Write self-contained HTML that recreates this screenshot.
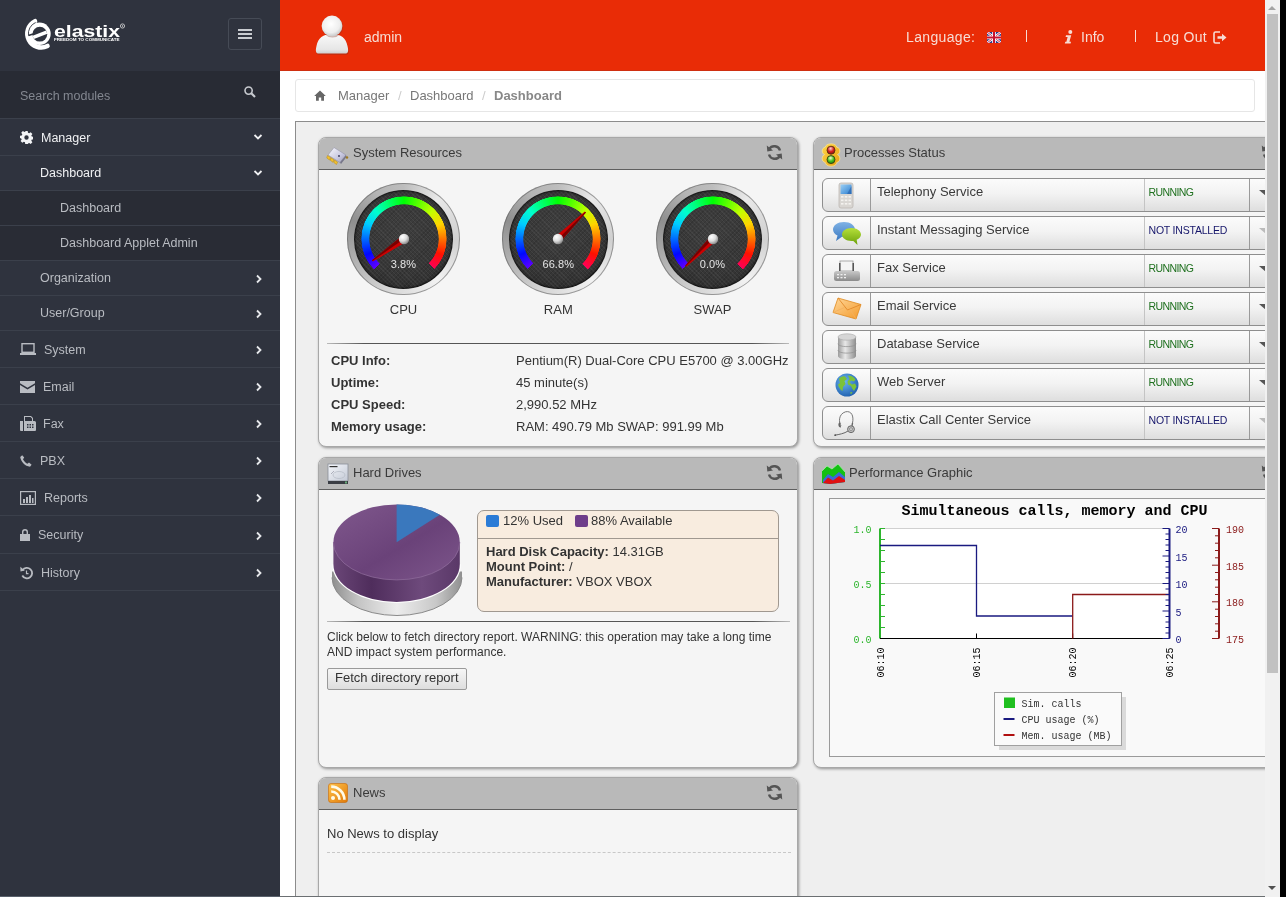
<!DOCTYPE html>
<html><head><meta charset="utf-8"><style>
*{box-sizing:border-box}
html,body{margin:0;padding:0;width:1286px;height:897px;overflow:hidden;background:#000;font-family:"Liberation Sans",sans-serif}
#vp{position:absolute;left:0;top:0;width:1280px;height:897px;background:#fff;overflow:hidden;will-change:transform}
#sb{position:absolute;left:1265px;top:0;width:15px;height:897px;background:#f1f1f1}
#sb .th{position:absolute;left:2px;top:14px;width:11px;height:659px;background:#c1c1c1}
#sb .up{position:absolute;left:3px;top:6px;width:0;height:0;border-left:4px solid transparent;border-right:4px solid transparent;border-bottom:4px solid #a3a3a3}
#sb .dn{position:absolute;left:3px;top:886px;width:0;height:0;border-left:4px solid transparent;border-right:4px solid transparent;border-top:4px solid #505050}
#side{position:absolute;left:0;top:0;width:280px;height:897px;background:#2f333e}
#side .logo{position:absolute;left:0;top:0;width:280px;height:71px}
#side .burger{position:absolute;left:228px;top:18px;width:34px;height:32px;border:1px solid #464b56;border-radius:3px}
#side .burger i{position:absolute;left:9px;width:14px;height:2px;background:#c8cbd0}
#side .search{position:absolute;left:0;top:71px;width:280px;height:48px;background:#282b34;border-bottom:1px solid #3b404b}
#side .search span{position:absolute;left:20px;top:18px;font-size:12.5px;line-height:15px;color:#838790}
.mi{position:absolute;left:0;width:280px;border-bottom:1px solid #3b404b;color:#c8cad0;font-size:12.5px;line-height:15px}
.mi .t{position:absolute;top:0;white-space:nowrap}
.mi .ch{position:absolute;left:255px}
#hdr{position:absolute;left:280px;top:0;width:985px;height:71px;background:#e92c06}
.ht{position:absolute;color:#f7dcd4;font-size:14px;line-height:16px;white-space:nowrap}
#bc{position:absolute;left:295px;top:79px;width:960px;height:33px;border:1px solid #e6e6e6;border-radius:3px;background:#fff}
.bt{position:absolute;top:8px;font-size:13px;line-height:15px;color:#777;white-space:nowrap}
#frame{position:absolute;left:295px;top:121px;width:1000px;height:800px;border:1px solid #8c8c8c;background:#efefef}
.pn{position:absolute;background:#f5f5f5;border:1px solid #a8a8a8;border-radius:8px;box-shadow:1px 1px 3px rgba(0,0,0,.4)}
.ph{position:absolute;left:0;top:0;right:0;height:32px;background:#b9b9b9;border-bottom:1px solid #5f5f5f;border-radius:7px 7px 0 0}
.ph .tt{position:absolute;left:35px;top:7px;font-size:13px;line-height:15px;color:#3a3a3a;white-space:nowrap}
.abs{position:absolute}
.nw{white-space:nowrap}

</style></head><body>
<div id="vp">
<div id="side"><svg class="abs" style="left:0px;top:0px" width="140" height="70" viewBox="0 0 140 70">
<path d="M35 21.2 A13.2 13.2 0 0 0 47.5 46" fill="none" stroke="#fff" stroke-width="4.6" stroke-linecap="round"/>
<circle cx="39.5" cy="33.8" r="11.2" fill="#fff"/>
<path d="M35.6 22.5 A12 12 0 0 0 28.6 35.6" fill="none" stroke="#2f333e" stroke-width="0.9"/>
<clipPath id="lgc"><circle cx="39.8" cy="34.2" r="7.4"/></clipPath>
<g clip-path="url(#lgc)"><rect x="28" y="24" width="24" height="22" fill="#2f333e"/><path d="M28 39.5 L51 30.5" stroke="#fff" stroke-width="3.6"/></g>
<path d="M28.5 35.5 L33 34" stroke="#2f333e" stroke-width="1.6"/>
<text x="54" y="36.7" font-family="Liberation Sans" font-weight="bold" font-size="16.5" fill="#fff" textLength="66" lengthAdjust="spacingAndGlyphs">elastix</text>
<text x="54" y="41" font-family="Liberation Sans" font-weight="bold" font-size="3.4" fill="#fff" textLength="65.5" lengthAdjust="spacingAndGlyphs">FREEDOM TO COMMUNICATE</text>
<circle cx="122.5" cy="26" r="2.1" fill="none" stroke="#ddd" stroke-width="0.8"/><circle cx="122.5" cy="26" r="0.7" fill="#ddd"/>
</svg><div class="burger"><i style="top:10px"></i><i style="top:14px"></i><i style="top:18px"></i></div><div class="search"><span>Search modules</span><svg style="position:absolute;left:244px;top:15px" width="12" height="12" viewBox="0 0 12 12"><circle cx="4.6" cy="4.6" r="3.6" stroke="#c8cbd0" stroke-width="1.6" fill="none"/><path d="M7.3 7.3L11 11" stroke="#c8cbd0" stroke-width="2.2"/></svg></div><div class="mi" style="top:119px;height:37px;"><span class="t" style="left:41px;top:12px;color:#f0f1f3">Manager</span><svg class="ch" width="10" height="8" style="top:14px;left:253px" viewBox="0 0 10 8"><path d="M1.5 2 L5 5.5 L8.5 2" stroke="#f0f1f3" stroke-width="1.8" fill="none"/></svg></div><svg style="position:absolute;left:20px;top:131px" width="13" height="13" viewBox="0 0 13 13"><path fill="#f3f4f6" d="M5.3 0h2.4l.3 1.8 1.2.5 1.5-1.1 1.7 1.7-1.1 1.5.5 1.2 1.8.3v2.4l-1.8.3-.5 1.2 1.1 1.5-1.7 1.7-1.5-1.1-1.2.5-.3 1.8H5.3L5 11.2l-1.2-.5-1.5 1.1L.6 10.1l1.1-1.5-.5-1.2L0 7.1V4.7l1.8-.3.5-1.2L1.2 1.7 2.9 0 4.4 1.1l1.2-.5z M6.5 4.3a2.2 2.2 0 1 0 0 4.4a2.2 2.2 0 1 0 0-4.4z"/></svg>
<div class="mi" style="top:156px;height:35px;"><span class="t" style="left:40px;top:10px;color:#f0f1f3">Dashboard</span><svg class="ch" width="10" height="8" style="top:13px;left:253px" viewBox="0 0 10 8"><path d="M1.5 2 L5 5.5 L8.5 2" stroke="#f0f1f3" stroke-width="1.8" fill="none"/></svg></div>
<div class="mi" style="top:191px;height:35px;background:#292c35;"><span class="t" style="left:60px;top:10px;color:#b9bcc2">Dashboard</span></div>
<div class="mi" style="top:226px;height:35px;background:#292c35;"><span class="t" style="left:60px;top:10px;color:#b9bcc2">Dashboard Applet Admin</span></div>
<div class="mi" style="top:261px;height:35px;"><span class="t" style="left:40px;top:10px;color:#b9bcc2">Organization</span><svg class="ch" width="8" height="10" style="top:13px;left:255px" viewBox="0 0 8 10"><path d="M2 1.5 L5.5 5 L2 8.5" stroke="#e6e8eb" stroke-width="1.8" fill="none"/></svg></div>
<div class="mi" style="top:296px;height:35px;"><span class="t" style="left:40px;top:10px;color:#b9bcc2">User/Group</span><svg class="ch" width="8" height="10" style="top:13px;left:255px" viewBox="0 0 8 10"><path d="M2 1.5 L5.5 5 L2 8.5" stroke="#e6e8eb" stroke-width="1.8" fill="none"/></svg></div>
<div class="mi" style="top:331px;height:37px;"><span class="t" style="left:44px;top:12px;color:#b9bcc2">System</span><svg class="ch" width="8" height="10" style="top:14px;left:255px" viewBox="0 0 8 10"><path d="M2 1.5 L5.5 5 L2 8.5" stroke="#e6e8eb" stroke-width="1.8" fill="none"/></svg></div><svg style="position:absolute;left:20px;top:343px" width="16" height="12" viewBox="0 0 16 12"><rect x="2" y="0.7" width="12" height="8.6" fill="none" stroke="#b9bcc2" stroke-width="1.4"/><rect x="0" y="10" width="16" height="2" fill="#b9bcc2"/></svg>
<div class="mi" style="top:368px;height:37px;"><span class="t" style="left:43px;top:12px;color:#b9bcc2">Email</span><svg class="ch" width="8" height="10" style="top:14px;left:255px" viewBox="0 0 8 10"><path d="M2 1.5 L5.5 5 L2 8.5" stroke="#e6e8eb" stroke-width="1.8" fill="none"/></svg></div><svg style="position:absolute;left:20px;top:381px" width="15" height="12" viewBox="0 0 15 12"><path fill="#b9bcc2" d="M0 0h15v2.2L7.5 6.8 0 2.2z M0 4l7.5 4.6L15 4v8H0z"/></svg>
<div class="mi" style="top:405px;height:37px;"><span class="t" style="left:43px;top:12px;color:#b9bcc2">Fax</span><svg class="ch" width="8" height="10" style="top:14px;left:255px" viewBox="0 0 8 10"><path d="M2 1.5 L5.5 5 L2 8.5" stroke="#e6e8eb" stroke-width="1.8" fill="none"/></svg></div><svg style="position:absolute;left:20px;top:416px" width="16" height="15" viewBox="0 0 16 15"><path fill="#b9bcc2" d="M0 5h3v10H1a1 1 0 0 1-1-1z M4 5V0h7l2 2v3h1.5a1.5 1.5 0 0 1 1.5 1.5V14a1 1 0 0 1-1 1H4z M5 1v4h7V2.5L10.5 1z"/><g fill="#2f333e"><rect x="7" y="8" width="1.5" height="1.5"/><rect x="9.5" y="8" width="1.5" height="1.5"/><rect x="12" y="8" width="1.5" height="1.5"/><rect x="7" y="10.5" width="1.5" height="1.5"/><rect x="9.5" y="10.5" width="1.5" height="1.5"/><rect x="12" y="10.5" width="1.5" height="1.5"/></g></svg>
<div class="mi" style="top:442px;height:37px;"><span class="t" style="left:40px;top:12px;color:#b9bcc2">PBX</span><svg class="ch" width="8" height="10" style="top:14px;left:255px" viewBox="0 0 8 10"><path d="M2 1.5 L5.5 5 L2 8.5" stroke="#e6e8eb" stroke-width="1.8" fill="none"/></svg></div><svg style="position:absolute;left:20px;top:455px" width="13" height="12" viewBox="0 0 13 12"><path fill="#b9bcc2" d="M2.2 0.2L4.2 2.6 3 4.2C3.8 6 5.5 7.8 7.4 8.8L9 7.6l2.6 2.1L10 11.8C5 11 1 7 0.2 2z"/></svg>
<div class="mi" style="top:479px;height:37px;"><span class="t" style="left:44px;top:12px;color:#b9bcc2">Reports</span><svg class="ch" width="8" height="10" style="top:14px;left:255px" viewBox="0 0 8 10"><path d="M2 1.5 L5.5 5 L2 8.5" stroke="#e6e8eb" stroke-width="1.8" fill="none"/></svg></div><svg style="position:absolute;left:20px;top:491px" width="16" height="14" viewBox="0 0 16 14"><rect x="0.6" y="0.6" width="14.8" height="12.8" fill="none" stroke="#b9bcc2" stroke-width="1.2"/><rect x="3" y="8" width="2" height="4" fill="#b9bcc2"/><rect x="6" y="6" width="2" height="6" fill="#b9bcc2"/><rect x="9" y="4" width="2" height="8" fill="#b9bcc2"/><rect x="12" y="7" width="1.5" height="5" fill="#b9bcc2"/></svg>
<div class="mi" style="top:516px;height:38px;"><span class="t" style="left:38px;top:12px;color:#b9bcc2">Security</span><svg class="ch" width="8" height="10" style="top:15px;left:255px" viewBox="0 0 8 10"><path d="M2 1.5 L5.5 5 L2 8.5" stroke="#e6e8eb" stroke-width="1.8" fill="none"/></svg></div><svg style="position:absolute;left:20px;top:528px" width="10" height="13" viewBox="0 0 10 13"><path fill="#b9bcc2" d="M0 6h10v7H0z M2 6V4a3 3 0 0 1 6 0v2H6.6V4a1.6 1.6 0 0 0-3.2 0v2z"/></svg>
<div class="mi" style="top:554px;height:37px;"><span class="t" style="left:41px;top:12px;color:#b9bcc2">History</span><svg class="ch" width="8" height="10" style="top:14px;left:255px" viewBox="0 0 8 10"><path d="M2 1.5 L5.5 5 L2 8.5" stroke="#e6e8eb" stroke-width="1.8" fill="none"/></svg></div><svg style="position:absolute;left:20px;top:566px" width="14" height="14" viewBox="0 0 14 14"><path d="M2.6 4.2A5.2 5.2 0 1 1 2.3 9.5" fill="none" stroke="#b9bcc2" stroke-width="1.8"/><path fill="#b9bcc2" d="M0.3 0.8L4.8 4.6 0.5 5.4z"/><path d="M6.5 4.5V7.6H8.5" fill="none" stroke="#b9bcc2" stroke-width="1.2"/></svg></div>
<div id="hdr"></div><div class="abs" style="left:280px;top:70px;width:985px;height:1px;background:#cf2f10"></div><svg class="abs" style="left:314px;top:13px" width="36" height="44" viewBox="0 0 36 44">
<defs><radialGradient id="ug1" cx="0.45" cy="0.4" r="0.6"><stop offset="0" stop-color="#ffffff"/><stop offset="0.7" stop-color="#eeeeee"/><stop offset="1" stop-color="#c9c9c9"/></radialGradient>
<linearGradient id="ug2" x1="0" y1="0" x2="0" y2="1"><stop offset="0" stop-color="#fafafa"/><stop offset="0.8" stop-color="#e6e6e6"/><stop offset="1" stop-color="#cfcfcf"/></linearGradient></defs>
<path d="M4 40.5 C1.5 40 1.5 37 2.5 33 C4 25 9 21 18 21 C27 21 32 25 33.5 33 C34.5 37 34.5 40 32 40.5 Z" fill="#8a3020" opacity="0.45" transform="translate(0.5,1.2)"/>
<path d="M4 40.5 C1.5 40 1.5 37 2.5 33 C4 25 9 21 18 21 C27 21 32 25 33.5 33 C34.5 37 34.5 40 32 40.5 Z" fill="url(#ug2)"/>
<circle cx="18.5" cy="14" r="10.6" fill="#8a3020" opacity="0.35"/>
<circle cx="18" cy="13" r="10.4" fill="url(#ug1)"/>
</svg><span class="ht" style="left:364px;top:29px">admin</span><span class="ht" style="left:906px;top:29px;letter-spacing:0.35px">Language:</span><svg class="abs" style="left:987px;top:32px" width="14" height="11" viewBox="0 0 14 11">
<rect width="14" height="11" fill="#2b3a8a"/>
<path d="M0 0L14 11M14 0L0 11" stroke="#fff" stroke-width="2.4"/>
<path d="M0 0L14 11M14 0L0 11" stroke="#c8102e" stroke-width="0.9"/>
<path d="M7 0V11M0 5.5H14" stroke="#fff" stroke-width="3.6"/>
<path d="M7 0V11M0 5.5H14" stroke="#c8102e" stroke-width="2"/>
</svg><div class="abs" style="left:1026px;top:30px;width:1px;height:12px;background:#f7dcd4"></div><svg class="abs" style="left:1064px;top:30px" width="10" height="14" viewBox="0 0 10 14"><circle cx="6.3" cy="2" r="2" fill="#f7dcd4"/><path d="M2 5.3H7.2L5.4 11.7H7L6.6 13.5H0.8L1.3 11.7H2.4L3.6 7.1H1.6z" fill="#f7dcd4"/></svg><span class="ht" style="left:1081px;top:29px">Info</span><div class="abs" style="left:1135px;top:30px;width:1px;height:12px;background:#f7dcd4"></div><span class="ht" style="left:1155px;top:29px;letter-spacing:0.3px">Log Out</span><svg class="abs" style="left:1213px;top:31px" width="14" height="13" viewBox="0 0 14 13"><path d="M7 1H2.5A1.5 1.5 0 0 0 1 2.5V10.5A1.5 1.5 0 0 0 2.5 12H7" fill="none" stroke="#f7dcd4" stroke-width="1.6"/><path d="M4.5 5.2H9V2.8L13.5 6.5 9 10.2V7.8H4.5z" fill="#f7dcd4"/></svg><div id="bc"></div><svg class="abs" style="left:314px;top:90px" width="12" height="11" viewBox="0 0 12 11"><path d="M6 0.5L0.2 6H2V10.8H4.8V7.5H7.2V10.8H10V6H11.8z" fill="#666"/></svg><span class="bt" style="left:338px;top:88px">Manager</span><span class="bt" style="left:398px;top:88px;color:#ccc">/</span><span class="bt" style="left:410px;top:88px">Dashboard</span><span class="bt" style="left:482px;top:88px;color:#ccc">/</span><span class="bt" style="left:494px;top:88px;font-weight:bold;color:#888">Dashboard</span><div id="frame"></div><div class="pn" style="left:318px;top:137px;width:480px;height:310px"><div class="ph"><span class="tt" style="left:34px">System Resources</span><svg class="abs" style="right:14px;top:6px" width="17" height="17" viewBox="0 0 17 17"><path d="M14 6.5A6 6 0 0 0 3.2 5" fill="none" stroke="#555" stroke-width="2.4"/><path d="M0.8 1.5L1.3 7.5 7 6.5z" fill="#555"/><path d="M3 10.5A6 6 0 0 0 13.8 12" fill="none" stroke="#555" stroke-width="2.4"/><path d="M16.2 15.5L15.7 9.5 10 10.5z" fill="#555"/></svg></div></div><svg class="abs" style="left:326px;top:145px" width="24" height="20" viewBox="0 0 24 20"><defs><linearGradient id="chb" x1="0" y1="0" x2="1" y2="1"><stop offset="0" stop-color="#fafaff"/><stop offset="0.6" stop-color="#c9c9e0"/><stop offset="1" stop-color="#9a9ab8"/></linearGradient></defs>
<path d="M8 2.5L20 10 14 17.5 2 10z" fill="url(#chb)" stroke="#8a8aa0" stroke-width="0.5"/><path d="M14 17.5L20 10 20.5 12 15 19z" fill="#77778a"/>
<g fill="#f2c12e" stroke="#b98a10" stroke-width="0.5"><path d="M1.5 10.5L4.5 12.5 3.5 15 0.8 13z"/><path d="M5 12.8L8 14.8 7 17.3 4.3 15.3z"/><path d="M8.5 15L11.5 17 10.5 19.5 7.8 17.5z"/></g><circle cx="13" cy="11" r="0.9" fill="#335"/><circle cx="21" cy="12.5" r="1.2" fill="#a07a20"/></svg><div class="abs" style="left:347.3px;top:183.10000000000002px;width:112.4px;height:112.4px;border-radius:50%;background:conic-gradient(from 0deg,#bdbdbd,#e9e9e9 40deg,#cfcfcf 90deg,#f2f2f2 140deg,#d4d4d4 200deg,#8f8f8f 290deg,#b5b5b5 330deg,#bdbdbd);box-shadow:inset 0 0 0 1px rgba(90,90,90,.55)"></div><div class="abs" style="left:354.0px;top:189.8px;width:99.0px;height:99.0px;border-radius:50%;background:repeating-linear-gradient(45deg,rgba(255,255,255,.05) 0 1px,transparent 1px 3px),repeating-linear-gradient(-45deg,rgba(0,0,0,.12) 0 1px,transparent 1px 3px),radial-gradient(circle at 50% 40%,#3e3e3e 0%,#363636 60%,#262626 100%);box-shadow:inset 0 0 2px 1px rgba(0,0,0,.7)"></div><div class="abs" style="left:360.5px;top:196.3px;width:86px;height:86px;border-radius:50%;background:conic-gradient(from 225deg,hsl(262,100%,50%) 0.0deg,hsl(238,100%,50%) 22.5deg,hsl(215,100%,50%) 45.0deg,hsl(192,100%,50%) 67.5deg,hsl(168,100%,50%) 90.0deg,hsl(144,100%,50%) 112.5deg,hsl(121,100%,50%) 135.0deg,hsl(98,100%,50%) 157.5deg,hsl(74,100%,50%) 180.0deg,hsl(50,100%,50%) 202.5deg,hsl(27,100%,50%) 225.0deg,hsl(4,100%,50%) 247.5deg,hsl(340,100%,50%) 270.0deg,transparent 270deg);-webkit-mask:radial-gradient(circle closest-side,transparent 34.3px,#000 35px,#000 42.3px,transparent 43px)"></div><svg class="abs" style="left:358.5px;top:194.3px" width="90" height="90" viewBox="-45 -45 90 90"><polygon points="-2.05,-2.96 -32.09,21.29 -31.19,22.59 2.05,2.96" fill="#cc0000"/><polygon points="-2.05,-2.96 -32.09,21.29 -31.64,21.94 0,0" fill="#780000"/><defs><radialGradient id="kn0" cx="0.35" cy="0.3" r="0.8"><stop offset="0" stop-color="#fff"/><stop offset="0.5" stop-color="#ddd"/><stop offset="1" stop-color="#777"/></radialGradient></defs><circle cx="0" cy="0" r="5.2" fill="url(#kn0)"/></svg><div class="abs nw" style="left:373.5px;top:258.3px;width:60px;text-align:center;font-size:11px;line-height:13px;letter-spacing:0.1px;color:#e4e4e4">3.8%</div><div class="abs nw" style="left:373.5px;top:302.3px;width:60px;text-align:center;font-size:13px;line-height:15px;color:#333">CPU</div><div class="abs" style="left:502.09999999999997px;top:183.10000000000002px;width:112.4px;height:112.4px;border-radius:50%;background:conic-gradient(from 0deg,#bdbdbd,#e9e9e9 40deg,#cfcfcf 90deg,#f2f2f2 140deg,#d4d4d4 200deg,#8f8f8f 290deg,#b5b5b5 330deg,#bdbdbd);box-shadow:inset 0 0 0 1px rgba(90,90,90,.55)"></div><div class="abs" style="left:508.79999999999995px;top:189.8px;width:99.0px;height:99.0px;border-radius:50%;background:repeating-linear-gradient(45deg,rgba(255,255,255,.05) 0 1px,transparent 1px 3px),repeating-linear-gradient(-45deg,rgba(0,0,0,.12) 0 1px,transparent 1px 3px),radial-gradient(circle at 50% 40%,#3e3e3e 0%,#363636 60%,#262626 100%);box-shadow:inset 0 0 2px 1px rgba(0,0,0,.7)"></div><div class="abs" style="left:515.3px;top:196.3px;width:86px;height:86px;border-radius:50%;background:conic-gradient(from 225deg,hsl(262,100%,50%) 0.0deg,hsl(238,100%,50%) 22.5deg,hsl(215,100%,50%) 45.0deg,hsl(192,100%,50%) 67.5deg,hsl(168,100%,50%) 90.0deg,hsl(144,100%,50%) 112.5deg,hsl(121,100%,50%) 135.0deg,hsl(98,100%,50%) 157.5deg,hsl(74,100%,50%) 180.0deg,hsl(50,100%,50%) 202.5deg,hsl(27,100%,50%) 225.0deg,hsl(4,100%,50%) 247.5deg,hsl(340,100%,50%) 270.0deg,transparent 270deg);-webkit-mask:radial-gradient(circle closest-side,transparent 34.3px,#000 35px,#000 42.3px,transparent 43px)"></div><svg class="abs" style="left:513.3px;top:194.3px" width="90" height="90" viewBox="-45 -45 90 90"><polygon points="2.53,2.56 27.95,-26.49 26.84,-27.62 -2.53,-2.56" fill="#cc0000"/><polygon points="2.53,2.56 27.95,-26.49 27.39,-27.05 0,0" fill="#780000"/><defs><radialGradient id="kn1" cx="0.35" cy="0.3" r="0.8"><stop offset="0" stop-color="#fff"/><stop offset="0.5" stop-color="#ddd"/><stop offset="1" stop-color="#777"/></radialGradient></defs><circle cx="0" cy="0" r="5.2" fill="url(#kn1)"/></svg><div class="abs nw" style="left:528.3px;top:258.3px;width:60px;text-align:center;font-size:11px;line-height:13px;letter-spacing:0.1px;color:#e4e4e4">66.8%</div><div class="abs nw" style="left:528.3px;top:302.3px;width:60px;text-align:center;font-size:13px;line-height:15px;color:#333">RAM</div><div class="abs" style="left:656.3px;top:183.10000000000002px;width:112.4px;height:112.4px;border-radius:50%;background:conic-gradient(from 0deg,#bdbdbd,#e9e9e9 40deg,#cfcfcf 90deg,#f2f2f2 140deg,#d4d4d4 200deg,#8f8f8f 290deg,#b5b5b5 330deg,#bdbdbd);box-shadow:inset 0 0 0 1px rgba(90,90,90,.55)"></div><div class="abs" style="left:663.0px;top:189.8px;width:99.0px;height:99.0px;border-radius:50%;background:repeating-linear-gradient(45deg,rgba(255,255,255,.05) 0 1px,transparent 1px 3px),repeating-linear-gradient(-45deg,rgba(0,0,0,.12) 0 1px,transparent 1px 3px),radial-gradient(circle at 50% 40%,#3e3e3e 0%,#363636 60%,#262626 100%);box-shadow:inset 0 0 2px 1px rgba(0,0,0,.7)"></div><div class="abs" style="left:669.5px;top:196.3px;width:86px;height:86px;border-radius:50%;background:conic-gradient(from 225deg,hsl(262,100%,50%) 0.0deg,hsl(238,100%,50%) 22.5deg,hsl(215,100%,50%) 45.0deg,hsl(192,100%,50%) 67.5deg,hsl(168,100%,50%) 90.0deg,hsl(144,100%,50%) 112.5deg,hsl(121,100%,50%) 135.0deg,hsl(98,100%,50%) 157.5deg,hsl(74,100%,50%) 180.0deg,hsl(50,100%,50%) 202.5deg,hsl(27,100%,50%) 225.0deg,hsl(4,100%,50%) 247.5deg,hsl(340,100%,50%) 270.0deg,transparent 270deg);-webkit-mask:radial-gradient(circle closest-side,transparent 34.3px,#000 35px,#000 42.3px,transparent 43px)"></div><svg class="abs" style="left:667.5px;top:194.3px" width="90" height="90" viewBox="-45 -45 90 90"><polygon points="-2.55,-2.55 -27.78,26.66 -26.66,27.78 2.55,2.55" fill="#cc0000"/><polygon points="-2.55,-2.55 -27.78,26.66 -27.22,27.22 0,0" fill="#780000"/><defs><radialGradient id="kn2" cx="0.35" cy="0.3" r="0.8"><stop offset="0" stop-color="#fff"/><stop offset="0.5" stop-color="#ddd"/><stop offset="1" stop-color="#777"/></radialGradient></defs><circle cx="0" cy="0" r="5.2" fill="url(#kn2)"/></svg><div class="abs nw" style="left:682.5px;top:258.3px;width:60px;text-align:center;font-size:11px;line-height:13px;letter-spacing:0.1px;color:#e4e4e4">0.0%</div><div class="abs nw" style="left:682.5px;top:302.3px;width:60px;text-align:center;font-size:13px;line-height:15px;color:#333">SWAP</div><div class="abs" style="left:327px;top:343px;width:462px;height:1px;background:linear-gradient(90deg,#bbb,#555 8%,#555 92%,#bbb)"></div><div class="abs nw" style="left:331px;top:353px;font-size:13px;line-height:15px;font-weight:bold;color:#333">CPU Info:</div><div class="abs nw" style="left:516px;top:353px;font-size:13px;line-height:15px;color:#333">Pentium(R) Dual-Core CPU E5700 @ 3.00GHz</div><div class="abs nw" style="left:331px;top:375px;font-size:13px;line-height:15px;font-weight:bold;color:#333">Uptime:</div><div class="abs nw" style="left:516px;top:375px;font-size:13px;line-height:15px;color:#333">45 minute(s)</div><div class="abs nw" style="left:331px;top:397px;font-size:13px;line-height:15px;font-weight:bold;color:#333">CPU Speed:</div><div class="abs nw" style="left:516px;top:397px;font-size:13px;line-height:15px;color:#333">2,990.52 MHz</div><div class="abs nw" style="left:331px;top:419px;font-size:13px;line-height:15px;font-weight:bold;color:#333">Memory usage:</div><div class="abs nw" style="left:516px;top:419px;font-size:13px;line-height:15px;color:#333">RAM: 490.79 Mb SWAP: 991.99 Mb</div><div class="pn" style="left:318px;top:457px;width:480px;height:311px"><div class="ph"><span class="tt" style="left:34px">Hard Drives</span><svg class="abs" style="right:14px;top:6px" width="17" height="17" viewBox="0 0 17 17"><path d="M14 6.5A6 6 0 0 0 3.2 5" fill="none" stroke="#555" stroke-width="2.4"/><path d="M0.8 1.5L1.3 7.5 7 6.5z" fill="#555"/><path d="M3 10.5A6 6 0 0 0 13.8 12" fill="none" stroke="#555" stroke-width="2.4"/><path d="M16.2 15.5L15.7 9.5 10 10.5z" fill="#555"/></svg></div></div><svg class="abs" style="left:327px;top:463px" width="22" height="22" viewBox="0 0 22 22"><defs><linearGradient id="hdb" x1="0" y1="0" x2="1" y2="1"><stop offset="0" stop-color="#f4f6fa"/><stop offset="1" stop-color="#c4cad6"/></linearGradient></defs>
<rect x="1" y="1" width="20" height="17" fill="url(#hdb)" stroke="#8a8f9a" stroke-width="0.8"/><rect x="2.5" y="3" width="8" height="1.2" fill="#333"/><ellipse cx="12" cy="12" rx="6" ry="3.5" fill="none" stroke="#b8bec8" stroke-width="0.8"/><path d="M4 11L7 8" stroke="#889" stroke-width="0.6"/>
<rect x="1" y="18" width="20" height="3" fill="#3a3d44"/><rect x="18" y="18.5" width="2" height="2" fill="#6a7"/></svg><svg class="abs" style="left:326px;top:498px" width="142" height="124" viewBox="0 0 142 124"><defs>
<linearGradient id="pgBase" x1="0" y1="0" x2="1" y2="0"><stop offset="0" stop-color="#8e8e8e"/><stop offset="0.2" stop-color="#c4c4c4"/><stop offset="0.5" stop-color="#ececec"/><stop offset="0.8" stop-color="#c8c8c8"/><stop offset="1" stop-color="#909090"/></linearGradient>
<linearGradient id="pgSide" x1="0" y1="0" x2="1" y2="0"><stop offset="0" stop-color="#6a4677"/><stop offset="0.3" stop-color="#4f2d5c"/><stop offset="0.7" stop-color="#6e4a7c"/><stop offset="1" stop-color="#5a3868"/></linearGradient>
<linearGradient id="pgTop" x1="0" y1="0" x2="1" y2="1"><stop offset="0" stop-color="#80588d"/><stop offset="0.55" stop-color="#6a4279"/><stop offset="1" stop-color="#7d568b"/></linearGradient>
</defs><path d="M6.00,73.50 L6.00,79.50 A65,38 0 0 0 136.00,79.50 L136.00,73.50 Z" fill="url(#pgBase)"/><path d="M6.00,79.50 A65,38 0 0 0 136.00,79.50" fill="none" stroke="#8a8a8a" stroke-width="1"/><path d="M7.40,66.20 A63.2,37.7 0 0 0 133.80,66.20" fill="none" stroke="#fff" stroke-width="2.2"/><path d="M7.40,44.20 L7.40,66.20 A63.2,37.7 0 0 0 133.80,66.20 L133.80,44.20 Z" fill="url(#pgSide)"/><ellipse cx="70.60" cy="44.20" rx="63.2" ry="37.7" fill="url(#pgTop)"/><path d="M70.60,44.20 L70.60,6.50 A63.2,37.7 0 0 1 113.86,16.72 Z" fill="#3a78bd"/><path d="M7.40,44.20 A63.2,37.7 0 0 0 133.80,44.20" fill="none" stroke="#8d6a99" stroke-width="0.8"/></svg><div class="abs" style="left:477px;top:510px;width:302px;height:102px;background:#f8ecdf;border:1px solid #a09890;border-radius:7px"></div><div class="abs" style="left:478px;top:538px;width:300px;height:1px;background:#a09890"></div><div class="abs" style="left:486px;top:515px;width:13px;height:12px;background:#2b7bd6;border-radius:2px"></div><div class="abs nw" style="left:503px;top:513px;font-size:13px;line-height:15px;color:#333">12% Used</div><div class="abs" style="left:575px;top:515px;width:13px;height:12px;background:#6e3d8a;border-radius:2px"></div><div class="abs nw" style="left:591px;top:513px;font-size:13px;line-height:15px;color:#333">88% Available</div><div class="abs nw" style="left:486px;top:544px;font-size:13px;line-height:15px;color:#333"><b>Hard Disk Capacity:</b> 14.31GB</div><div class="abs nw" style="left:486px;top:559px;font-size:13px;line-height:15px;color:#333"><b>Mount Point:</b> /</div><div class="abs nw" style="left:486px;top:574px;font-size:13px;line-height:15px;color:#333"><b>Manufacturer:</b> VBOX VBOX</div><div class="abs" style="left:327px;top:621px;width:463px;height:1px;background:linear-gradient(90deg,#bbb,#555 8%,#555 92%,#bbb)"></div><div class="abs" style="left:327px;top:630px;width:470px;font-size:12px;line-height:14.5px;color:#333">Click below to fetch directory report. WARNING: this operation may take a long time AND impact system performance.</div><div class="abs nw" style="left:327px;top:668px;width:140px;height:22px;border:1px solid #9a9a9a;border-radius:2px;background:linear-gradient(#f6f6f6,#dedede);font-size:13px;line-height:18px;color:#333;padding-left:7px">Fetch directory report</div><div class="pn" style="left:318px;top:777px;width:480px;height:200px"><div class="ph"><span class="tt" style="left:34px">News</span><svg class="abs" style="right:14px;top:6px" width="17" height="17" viewBox="0 0 17 17"><path d="M14 6.5A6 6 0 0 0 3.2 5" fill="none" stroke="#555" stroke-width="2.4"/><path d="M0.8 1.5L1.3 7.5 7 6.5z" fill="#555"/><path d="M3 10.5A6 6 0 0 0 13.8 12" fill="none" stroke="#555" stroke-width="2.4"/><path d="M16.2 15.5L15.7 9.5 10 10.5z" fill="#555"/></svg></div></div><svg class="abs" style="left:328px;top:783px" width="20" height="20" viewBox="0 0 20 20"><defs><linearGradient id="rsb" x1="0" y1="0" x2="1" y2="1"><stop offset="0" stop-color="#ffc24a"/><stop offset="1" stop-color="#e07a0a"/></linearGradient></defs>
<rect x="0.5" y="0.5" width="19" height="19" rx="2.5" fill="url(#rsb)" stroke="#c86a08" stroke-width="0.6"/><circle cx="5" cy="15" r="2" fill="#fffbe8"/><path d="M3.2 8.5A8.3 8.3 0 0 1 11.5 16.8" fill="none" stroke="#fffbe8" stroke-width="2.6"/><path d="M3.2 3.6A13.2 13.2 0 0 1 16.4 16.8" fill="none" stroke="#fffbe8" stroke-width="2.6"/></svg><div class="abs nw" style="left:327px;top:826px;font-size:13px;line-height:15px;color:#333">No News to display</div><div class="abs" style="left:327px;top:852px;width:464px;height:0;border-top:1px dashed #c8c8c8"></div><div class="pn" style="left:813px;top:137px;width:480px;height:310px"><div class="ph"><span class="tt" style="left:30px">Processes Status</span><svg class="abs" style="right:14px;top:6px" width="17" height="17" viewBox="0 0 17 17"><path d="M14 6.5A6 6 0 0 0 3.2 5" fill="none" stroke="#555" stroke-width="2.4"/><path d="M0.8 1.5L1.3 7.5 7 6.5z" fill="#555"/><path d="M3 10.5A6 6 0 0 0 13.8 12" fill="none" stroke="#555" stroke-width="2.4"/><path d="M16.2 15.5L15.7 9.5 10 10.5z" fill="#555"/></svg></div></div><svg class="abs" style="left:821px;top:143px" width="20" height="24" viewBox="0 0 20 24"><defs><radialGradient id="tlr" cx="0.45" cy="0.3" r="0.7"><stop offset="0" stop-color="#ffd0d0"/><stop offset="0.55" stop-color="#d42020"/><stop offset="1" stop-color="#8a1010"/></radialGradient><radialGradient id="tlg" cx="0.45" cy="0.3" r="0.7"><stop offset="0" stop-color="#f4ffd0"/><stop offset="0.55" stop-color="#48c420"/><stop offset="1" stop-color="#1f7a10"/></radialGradient><linearGradient id="tly" x1="0" y1="0" x2="1" y2="1"><stop offset="0" stop-color="#ffd84a"/><stop offset="1" stop-color="#e8a010"/></linearGradient></defs>
<path d="M10 0.8C13.5 0.8 15.5 2.5 15.8 4.2C17.8 4.6 18.8 6 18.8 8S17.6 11 16.5 11.6C17.8 12.2 18.8 13.5 18.8 15.5S17.8 19 15.8 19.4C15.5 21.5 13.5 23.2 10 23.2S4.5 21.5 4.2 19.4C2.2 19 1.2 17.5 1.2 15.5S2.2 12.2 3.5 11.6C2.4 11 1.2 10 1.2 8S2.2 4.6 4.2 4.2C4.5 2.5 6.5 0.8 10 0.8z" fill="url(#tly)" stroke="#fbe79a" stroke-width="0.7"/>
<circle cx="10" cy="7.2" r="4" fill="url(#tlr)" stroke="#5a3010" stroke-width="0.9"/><circle cx="10" cy="16.6" r="4" fill="url(#tlg)" stroke="#3a4010" stroke-width="0.9"/></svg><div class="abs" style="left:822px;top:178px;width:500px;height:34px;border:1px solid #8e8e8e;border-radius:6px;background:linear-gradient(#fbfbfb 0%,#f3f3f3 45%,#dedede 100%)"></div><div class="abs" style="left:870px;top:179px;width:1px;height:32px;background:#9a9a9a"></div><div class="abs" style="left:1144px;top:179px;width:1px;height:32px;background:#c4c4c4"></div><div class="abs" style="left:1249px;top:179px;width:1px;height:32px;background:#9a9a9a"></div><svg class="abs" style="left:838px;top:182px" width="16" height="27" viewBox="0 0 16 27"><defs><linearGradient id="phb" x1="0" y1="0" x2="1" y2="1"><stop offset="0" stop-color="#9cd0f5"/><stop offset="1" stop-color="#2d7fd0"/></linearGradient></defs>
<rect x="1" y="1" width="14" height="25" rx="2" fill="#d9d6d2" stroke="#bdb8b2" stroke-width="0.8"/><rect x="2.5" y="2.5" width="11" height="9.5" fill="url(#phb)"/><path d="M9 12L13.5 4V12z" fill="#2a5fa8" opacity=".6"/>
<g fill="#f4f2ef"><rect x="3" y="14" width="2.5" height="1.6"/><rect x="6.8" y="14" width="2.5" height="1.6"/><rect x="10.5" y="14" width="2.5" height="1.6"/><rect x="3" y="17.5" width="2.5" height="1.6"/><rect x="6.8" y="17.5" width="2.5" height="1.6"/><rect x="10.5" y="17.5" width="2.5" height="1.6"/><rect x="3" y="21" width="2.5" height="1.6"/><rect x="6.8" y="21" width="2.5" height="1.6"/><rect x="10.5" y="21" width="2.5" height="1.6"/></g></svg><div class="abs nw" style="left:877px;top:184px;font-size:13px;line-height:15px;color:#3a3a3a">Telephony Service</div><div class="abs nw" style="left:1148.5px;top:186px;font-size:10.5px;line-height:13px;letter-spacing:-0.6px;color:#1f701f">RUNNING</div><svg class="abs" style="left:1259px;top:190px" width="7" height="6" viewBox="0 0 7 6"><path d="M0 0H7L7 6z" fill="#555"/></svg><div class="abs" style="left:822px;top:216px;width:500px;height:34px;border:1px solid #8e8e8e;border-radius:6px;background:linear-gradient(#fbfbfb 0%,#f3f3f3 45%,#dedede 100%)"></div><div class="abs" style="left:870px;top:217px;width:1px;height:32px;background:#9a9a9a"></div><div class="abs" style="left:1144px;top:217px;width:1px;height:32px;background:#c4c4c4"></div><div class="abs" style="left:1249px;top:217px;width:1px;height:32px;background:#9a9a9a"></div><svg class="abs" style="left:832px;top:221px" width="31" height="25" viewBox="0 0 31 25"><defs><linearGradient id="cb1" x1="0" y1="0" x2="0" y2="1"><stop offset="0" stop-color="#7fb2e5"/><stop offset="1" stop-color="#3a78c0"/></linearGradient><linearGradient id="cb2" x1="0" y1="0" x2="0" y2="1"><stop offset="0" stop-color="#b6e03a"/><stop offset="1" stop-color="#6aa00a"/></linearGradient></defs>
<path d="M12 1C5.5 1 1 4.5 1 8.5c0 2.6 1.8 4.8 4.5 6.1L4 20l6-4.3c0.7 0.1 1.3 0.1 2 0.1 6.5 0 11-3.4 11-7.3S18.5 1 12 1z" fill="url(#cb1)"/>
<path d="M19.5 7C14.3 7 10 9.9 10 13.5c0 3.6 4.3 6.5 9.5 6.5c0.6 0 1.2 0 1.8-0.1L25.5 24l-0.8-5.2c2.7-1.2 4.3-3.1 4.3-5.3C29 9.9 24.7 7 19.5 7z" fill="url(#cb2)"/></svg><div class="abs nw" style="left:877px;top:222px;font-size:13px;line-height:15px;color:#3a3a3a">Instant Messaging Service</div><div class="abs nw" style="left:1148.5px;top:224px;font-size:10.5px;line-height:13px;letter-spacing:-0.2px;color:#16166a">NOT INSTALLED</div><svg class="abs" style="left:1259px;top:228px" width="7" height="6" viewBox="0 0 7 6"><path d="M0 0H7L7 6z" fill="#bbb"/></svg><div class="abs" style="left:822px;top:254px;width:500px;height:34px;border:1px solid #8e8e8e;border-radius:6px;background:linear-gradient(#fbfbfb 0%,#f3f3f3 45%,#dedede 100%)"></div><div class="abs" style="left:870px;top:255px;width:1px;height:32px;background:#9a9a9a"></div><div class="abs" style="left:1144px;top:255px;width:1px;height:32px;background:#c4c4c4"></div><div class="abs" style="left:1249px;top:255px;width:1px;height:32px;background:#9a9a9a"></div><svg class="abs" style="left:833px;top:260px" width="28" height="22" viewBox="0 0 28 22"><defs><linearGradient id="fxb" x1="0" y1="0" x2="0" y2="1"><stop offset="0" stop-color="#c8c8c8"/><stop offset="1" stop-color="#8a8a8a"/></linearGradient></defs>
<rect x="7" y="1" width="13" height="10" fill="#f4f4f4" stroke="#999" stroke-width="0.8"/><rect x="6" y="3" width="1.5" height="9" fill="#555"/><rect x="19.5" y="3" width="1.5" height="9" fill="#555"/>
<rect x="1" y="11" width="26" height="10" rx="2.5" fill="url(#fxb)"/><g fill="#eee"><rect x="4" y="14" width="2" height="1.3"/><rect x="7.5" y="14" width="2" height="1.3"/><rect x="11" y="14" width="2" height="1.3"/><rect x="4" y="17" width="2" height="1.3"/><rect x="7.5" y="17" width="2" height="1.3"/><rect x="11" y="17" width="2" height="1.3"/></g></svg><div class="abs nw" style="left:877px;top:260px;font-size:13px;line-height:15px;color:#3a3a3a">Fax Service</div><div class="abs nw" style="left:1148.5px;top:262px;font-size:10.5px;line-height:13px;letter-spacing:-0.6px;color:#1f701f">RUNNING</div><svg class="abs" style="left:1259px;top:266px" width="7" height="6" viewBox="0 0 7 6"><path d="M0 0H7L7 6z" fill="#555"/></svg><div class="abs" style="left:822px;top:292px;width:500px;height:34px;border:1px solid #8e8e8e;border-radius:6px;background:linear-gradient(#fbfbfb 0%,#f3f3f3 45%,#dedede 100%)"></div><div class="abs" style="left:870px;top:293px;width:1px;height:32px;background:#9a9a9a"></div><div class="abs" style="left:1144px;top:293px;width:1px;height:32px;background:#c4c4c4"></div><div class="abs" style="left:1249px;top:293px;width:1px;height:32px;background:#9a9a9a"></div><svg class="abs" style="left:832px;top:297px" width="30" height="23" viewBox="0 0 30 23"><defs><linearGradient id="em1" x1="0" y1="0" x2="1" y2="1"><stop offset="0" stop-color="#ffd79a"/><stop offset="1" stop-color="#f39a2a"/></linearGradient></defs>
<path d="M6 1L29 7.5 24 22 1 15.5z" fill="url(#em1)" stroke="#e08a20" stroke-width="0.8"/><path d="M6 1L15.5 13 29 7.5" fill="none" stroke="#e2892a" stroke-width="0.9"/><path d="M1 15.5L12.5 10.5M24 22L18 12" fill="none" stroke="#f1b060" stroke-width="0.8"/></svg><div class="abs nw" style="left:877px;top:298px;font-size:13px;line-height:15px;color:#3a3a3a">Email Service</div><div class="abs nw" style="left:1148.5px;top:300px;font-size:10.5px;line-height:13px;letter-spacing:-0.6px;color:#1f701f">RUNNING</div><svg class="abs" style="left:1259px;top:304px" width="7" height="6" viewBox="0 0 7 6"><path d="M0 0H7L7 6z" fill="#555"/></svg><div class="abs" style="left:822px;top:330px;width:500px;height:34px;border:1px solid #8e8e8e;border-radius:6px;background:linear-gradient(#fbfbfb 0%,#f3f3f3 45%,#dedede 100%)"></div><div class="abs" style="left:870px;top:331px;width:1px;height:32px;background:#9a9a9a"></div><div class="abs" style="left:1144px;top:331px;width:1px;height:32px;background:#c4c4c4"></div><div class="abs" style="left:1249px;top:331px;width:1px;height:32px;background:#9a9a9a"></div><svg class="abs" style="left:837px;top:333px" width="20" height="27" viewBox="0 0 20 27"><defs><linearGradient id="dbg" x1="0" y1="0" x2="1" y2="0"><stop offset="0" stop-color="#9c9c9c"/><stop offset="0.4" stop-color="#e8e8e8"/><stop offset="1" stop-color="#8e8e8e"/></linearGradient></defs>
<path d="M1 4V23C1 25 5 26.3 10 26.3S19 25 19 23V4z" fill="url(#dbg)"/><ellipse cx="10" cy="4" rx="9" ry="3.2" fill="#d6d6d6" stroke="#aaa" stroke-width="0.6"/><path d="M1 10.5C1 12.5 5 13.6 10 13.6S19 12.5 19 10.5M1 17C1 19 5 20.1 10 20.1S19 19 19 17" fill="none" stroke="#8f8f8f" stroke-width="0.7"/></svg><div class="abs nw" style="left:877px;top:336px;font-size:13px;line-height:15px;color:#3a3a3a">Database Service</div><div class="abs nw" style="left:1148.5px;top:338px;font-size:10.5px;line-height:13px;letter-spacing:-0.6px;color:#1f701f">RUNNING</div><svg class="abs" style="left:1259px;top:342px" width="7" height="6" viewBox="0 0 7 6"><path d="M0 0H7L7 6z" fill="#555"/></svg><div class="abs" style="left:822px;top:368px;width:500px;height:34px;border:1px solid #8e8e8e;border-radius:6px;background:linear-gradient(#fbfbfb 0%,#f3f3f3 45%,#dedede 100%)"></div><div class="abs" style="left:870px;top:369px;width:1px;height:32px;background:#9a9a9a"></div><div class="abs" style="left:1144px;top:369px;width:1px;height:32px;background:#c4c4c4"></div><div class="abs" style="left:1249px;top:369px;width:1px;height:32px;background:#9a9a9a"></div><svg class="abs" style="left:835px;top:373px" width="24" height="24" viewBox="0 0 24 24"><defs><radialGradient id="glb" cx="0.4" cy="0.35" r="0.7"><stop offset="0" stop-color="#6ab4f0"/><stop offset="1" stop-color="#1f5fae"/></radialGradient></defs>
<circle cx="12" cy="12" r="11.5" fill="url(#glb)"/><path d="M4 5.5C6 4 8 3 10 3.5L12 6 9.5 8 10.5 11 8 14 7.5 18C5.5 17 3.5 14 3 11.5L5 10z M13 2.5C16 2.5 19 4 20.5 6.5L19 8.5 16 7.5 14.5 9.5 17 11.5 20 10.5 21.5 13.5 19 18 17.5 16 16 13 13 11.5 12.5 8.5 14.5 6z M15 19.5L17.5 19 16 21.5z" fill="#7cc23a"/></svg><div class="abs nw" style="left:877px;top:374px;font-size:13px;line-height:15px;color:#3a3a3a">Web Server</div><div class="abs nw" style="left:1148.5px;top:376px;font-size:10.5px;line-height:13px;letter-spacing:-0.6px;color:#1f701f">RUNNING</div><svg class="abs" style="left:1259px;top:380px" width="7" height="6" viewBox="0 0 7 6"><path d="M0 0H7L7 6z" fill="#555"/></svg><div class="abs" style="left:822px;top:406px;width:500px;height:34px;border:1px solid #8e8e8e;border-radius:6px;background:linear-gradient(#fbfbfb 0%,#f3f3f3 45%,#dedede 100%)"></div><div class="abs" style="left:870px;top:407px;width:1px;height:32px;background:#9a9a9a"></div><div class="abs" style="left:1144px;top:407px;width:1px;height:32px;background:#c4c4c4"></div><div class="abs" style="left:1249px;top:407px;width:1px;height:32px;background:#9a9a9a"></div><svg class="abs" style="left:834px;top:410px" width="24" height="27" viewBox="0 0 24 27"><path d="M7 16C4.5 12 4.5 4 11.5 1.8C17.5 0.5 20 6 18.5 13" fill="none" stroke="#777" stroke-width="1"/><path d="M6.3 12.8C4.8 13.5 4.8 16.5 6.8 17" fill="none" stroke="#666" stroke-width="1.8"/><circle cx="17" cy="19.2" r="3.4" fill="#c8c8c8" stroke="#666" stroke-width="1"/><circle cx="17" cy="19.2" r="1.6" fill="none" stroke="#888" stroke-width="0.8"/><path d="M18.5 13L18 15.8" stroke="#666" stroke-width="1.4"/><path d="M14 21C10.5 23.5 5 24.5 0.8 25.2" fill="none" stroke="#666" stroke-width="1"/><circle cx="1.2" cy="25.2" r="0.9" fill="#555"/></svg><div class="abs nw" style="left:877px;top:412px;font-size:13px;line-height:15px;color:#3a3a3a">Elastix Call Center Service</div><div class="abs nw" style="left:1148.5px;top:414px;font-size:10.5px;line-height:13px;letter-spacing:-0.2px;color:#16166a">NOT INSTALLED</div><svg class="abs" style="left:1259px;top:418px" width="7" height="6" viewBox="0 0 7 6"><path d="M0 0H7L7 6z" fill="#bbb"/></svg><div class="abs" style="left:0;top:896px;width:280px;height:1px;background:#59606b"></div><div class="abs" style="left:280px;top:896px;width:985px;height:1px;background:#6b6f72"></div><div class="pn" style="left:813px;top:457px;width:480px;height:311px"><div class="ph"><span class="tt" style="left:35px">Performance Graphic</span><svg class="abs" style="right:14px;top:6px" width="17" height="17" viewBox="0 0 17 17"><path d="M14 6.5A6 6 0 0 0 3.2 5" fill="none" stroke="#555" stroke-width="2.4"/><path d="M0.8 1.5L1.3 7.5 7 6.5z" fill="#555"/><path d="M3 10.5A6 6 0 0 0 13.8 12" fill="none" stroke="#555" stroke-width="2.4"/><path d="M16.2 15.5L15.7 9.5 10 10.5z" fill="#555"/></svg></div></div><svg class="abs" style="left:821px;top:463px" width="26" height="21" viewBox="0 0 26 21"><path d="M1 8L6 3 11 6 17 1 24 9V19L9 21 1 20z" fill="#14c014"/><path d="M2 17L7 11 12 14 18 9 24 14V19L9 21 2 20z" fill="#3a6ad8"/><path d="M2 20L7 14.5 12 17.5 18 13 24 17V19L9 21z" fill="#e01010"/><path d="M1 8L6 3 11 6 17 1 24 9" fill="none" stroke="#a0f0a0" stroke-width="0.8"/></svg><div class="abs" style="left:829px;top:498px;width:460px;height:259px;border:1px solid #9a9a9a;background:#f9f9f9"></div><svg class="abs" style="left:829px;top:498px" width="460" height="259" viewBox="829 498 460 259" font-family="Liberation Mono"><rect x="880" y="528.5" width="289.5" height="110.0" fill="#fff"/><path d="M880 528.5H1169.5 M880 583.5H1169.5" stroke="#d0d0d0" stroke-width="1"/><text x="1054.5" y="515" text-anchor="middle" font-weight="bold" font-size="15" fill="#000">Simultaneous calls, memory and CPU</text><path d="M880 528.5V638.5" stroke="#2db52d" stroke-width="2"/><path d="M880 528.5H885" stroke="#2db52d" stroke-width="1"/><path d="M880 539.5H885" stroke="#2db52d" stroke-width="1"/><path d="M880 550.5H885" stroke="#2db52d" stroke-width="1"/><path d="M880 561.5H885" stroke="#2db52d" stroke-width="1"/><path d="M880 572.5H885" stroke="#2db52d" stroke-width="1"/><path d="M880 583.5H885" stroke="#2db52d" stroke-width="1"/><path d="M880 594.5H885" stroke="#2db52d" stroke-width="1"/><path d="M880 605.5H885" stroke="#2db52d" stroke-width="1"/><path d="M880 616.5H885" stroke="#2db52d" stroke-width="1"/><path d="M880 627.5H885" stroke="#2db52d" stroke-width="1"/><path d="M880 638.5H885" stroke="#2db52d" stroke-width="1"/><text x="871.5" y="533.0" text-anchor="end" font-size="10" fill="#2db52d">1.0</text><text x="871.5" y="588.0" text-anchor="end" font-size="10" fill="#2db52d">0.5</text><text x="871.5" y="643.0" text-anchor="end" font-size="10" fill="#2db52d">0.0</text><path d="M880 638.5H1169.5" stroke="#000" stroke-width="1.2"/><path d="M976.5 638.5V633.5" stroke="#000" stroke-width="1"/><path d="M1072.7 638.5V633.5" stroke="#000" stroke-width="1"/><path d="M880 545.5H976.5V616H1072.7" stroke="#1a1a80" stroke-width="1.3" fill="none"/><path d="M1072.7 638.5V594.5H1169.5" stroke="#8b1a1a" stroke-width="1.3" fill="none"/><path d="M1169.5 528.5V638.5" stroke="#1a1a80" stroke-width="2"/><path d="M1162.5 528.5H1169.5" stroke="#1a1a80" stroke-width="1"/><path d="M1165.5 534.0H1169.5" stroke="#1a1a80" stroke-width="1"/><path d="M1165.5 539.5H1169.5" stroke="#1a1a80" stroke-width="1"/><path d="M1165.5 545.0H1169.5" stroke="#1a1a80" stroke-width="1"/><path d="M1165.5 550.5H1169.5" stroke="#1a1a80" stroke-width="1"/><path d="M1162.5 556.0H1169.5" stroke="#1a1a80" stroke-width="1"/><path d="M1165.5 561.5H1169.5" stroke="#1a1a80" stroke-width="1"/><path d="M1165.5 567.0H1169.5" stroke="#1a1a80" stroke-width="1"/><path d="M1165.5 572.5H1169.5" stroke="#1a1a80" stroke-width="1"/><path d="M1165.5 578.0H1169.5" stroke="#1a1a80" stroke-width="1"/><path d="M1162.5 583.5H1169.5" stroke="#1a1a80" stroke-width="1"/><path d="M1165.5 589.0H1169.5" stroke="#1a1a80" stroke-width="1"/><path d="M1165.5 594.5H1169.5" stroke="#1a1a80" stroke-width="1"/><path d="M1165.5 600.0H1169.5" stroke="#1a1a80" stroke-width="1"/><path d="M1165.5 605.5H1169.5" stroke="#1a1a80" stroke-width="1"/><path d="M1162.5 611.0H1169.5" stroke="#1a1a80" stroke-width="1"/><path d="M1165.5 616.5H1169.5" stroke="#1a1a80" stroke-width="1"/><path d="M1165.5 622.0H1169.5" stroke="#1a1a80" stroke-width="1"/><path d="M1165.5 627.5H1169.5" stroke="#1a1a80" stroke-width="1"/><path d="M1165.5 633.0H1169.5" stroke="#1a1a80" stroke-width="1"/><path d="M1162.5 638.5H1169.5" stroke="#1a1a80" stroke-width="1"/><text x="1175.5" y="532.8" font-size="10" fill="#1a1a80">20</text><text x="1175.5" y="561.0" font-size="10" fill="#1a1a80">15</text><text x="1175.5" y="588.3" font-size="10" fill="#1a1a80">10</text><text x="1175.5" y="615.8" font-size="10" fill="#1a1a80">5</text><text x="1175.5" y="642.8" font-size="10" fill="#1a1a80">0</text><path d="M1219 528.5V638.5" stroke="#8b1a1a" stroke-width="2"/><path d="M1212 528.5H1219" stroke="#8b1a1a" stroke-width="1"/><path d="M1215 535.8H1219" stroke="#8b1a1a" stroke-width="1"/><path d="M1215 543.2H1219" stroke="#8b1a1a" stroke-width="1"/><path d="M1215 550.5H1219" stroke="#8b1a1a" stroke-width="1"/><path d="M1215 557.8H1219" stroke="#8b1a1a" stroke-width="1"/><path d="M1212 565.2H1219" stroke="#8b1a1a" stroke-width="1"/><path d="M1215 572.5H1219" stroke="#8b1a1a" stroke-width="1"/><path d="M1215 579.8H1219" stroke="#8b1a1a" stroke-width="1"/><path d="M1215 587.2H1219" stroke="#8b1a1a" stroke-width="1"/><path d="M1215 594.5H1219" stroke="#8b1a1a" stroke-width="1"/><path d="M1212 601.8H1219" stroke="#8b1a1a" stroke-width="1"/><path d="M1215 609.2H1219" stroke="#8b1a1a" stroke-width="1"/><path d="M1215 616.5H1219" stroke="#8b1a1a" stroke-width="1"/><path d="M1215 623.8H1219" stroke="#8b1a1a" stroke-width="1"/><path d="M1215 631.2H1219" stroke="#8b1a1a" stroke-width="1"/><path d="M1212 638.5H1219" stroke="#8b1a1a" stroke-width="1"/><text x="1226" y="532.8" font-size="10" fill="#8b1a1a">190</text><text x="1226" y="569.5" font-size="10" fill="#8b1a1a">185</text><text x="1226" y="606.1" font-size="10" fill="#8b1a1a">180</text><text x="1226" y="642.8" font-size="10" fill="#8b1a1a">175</text><text transform="translate(883.5,677.5) rotate(-90)" font-size="10" fill="#000">06:10</text><text transform="translate(980.0,677.5) rotate(-90)" font-size="10" fill="#000">06:15</text><text transform="translate(1076.2,677.5) rotate(-90)" font-size="10" fill="#000">06:20</text><text transform="translate(1173.0,677.5) rotate(-90)" font-size="10" fill="#000">06:25</text><rect x="999" y="697" width="127" height="53" fill="#dadada"/><rect x="994.5" y="692.5" width="127" height="53" fill="#fafafa" stroke="#a0a0a0" stroke-width="1"/><rect x="1004" y="697.5" width="11" height="10.5" fill="#1fbf1f"/><path d="M1003.5 719H1014.5" stroke="#1a1a80" stroke-width="2"/><path d="M1003.5 735H1014.5" stroke="#b01010" stroke-width="2"/><text x="1021.5" y="707" font-size="10" fill="#333">Sim. calls</text><text x="1021.5" y="723" font-size="10" fill="#333">CPU usage (%)</text><text x="1021.5" y="739" font-size="10" fill="#333">Mem. usage (MB)</text></svg>
<div id="sb"><div class="up"></div><div class="th"></div><div class="dn"></div></div>
</div>
</body></html>
